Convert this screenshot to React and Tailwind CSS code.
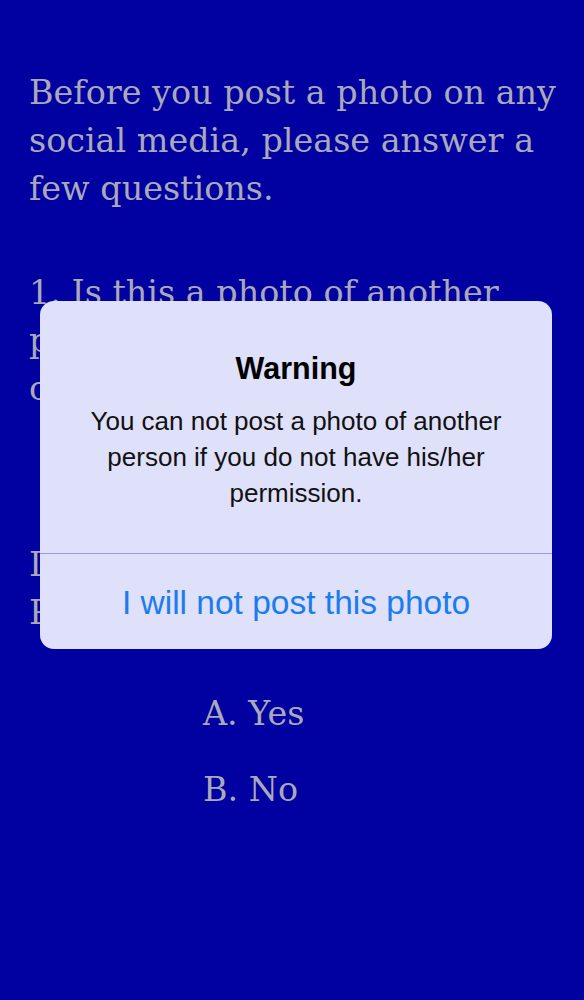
import React from 'react';

const serif = { fontFamily: '"DejaVu Serif", "Liberation Serif", serif' };
const sans = { fontFamily: '"Liberation Sans", Arial, sans-serif' };

const WarningAlert = () => (
  <div className="absolute inset-0 flex items-start justify-start pl-[40px] pt-[301px]">
    <div className="w-[512px] h-[348px] bg-[#dfe0f9] rounded-[14px] flex flex-col overflow-hidden" style={sans}>
      <div className="flex-1 flex flex-col items-center pt-[47px] px-4 text-center">
        <h2 className="text-[30.5px] leading-[40px] font-bold text-black">Warning</h2>
        <p className="mt-[15px] text-[26px] leading-[36px] text-[#111111] whitespace-nowrap">
          You can not post a photo of another
          <br />
          person if you do not have his/her
          <br />
          permission.
        </p>
      </div>
      <div className="h-px bg-[#9c9cdc]" />
      <button className="h-[95px] text-[33.5px] text-[#1b7ced] leading-none pt-[2px]">
        I will not post this photo
      </button>
    </div>
  </div>
);

export default function App() {
  return (
    <div className="relative w-full min-h-[1000px] bg-[#0100a0] overflow-hidden">
      <div className="pl-[29px] pr-[10px] pt-[69px] text-[#a9a9b9] text-[33.4px] leading-[48px] whitespace-nowrap" style={serif}>
        <p>
          Before you post a photo on any
          <br />
          social media, please answer a
          <br />
          few questions.
        </p>

        <p className="mt-[56px]">
          1. Is this a photo of another
          <br />
          person or does it contain
          <br />
          other people?
        </p>

        <p className="mt-[128px]">
          If yes, do you have his/her
          <br />
          Permission to post the photo?
        </p>

        <div className="mt-[53px] pl-[174px] flex flex-col gap-[28px]">
          <span>A. Yes</span>
          <span>B. No</span>
        </div>
      </div>

      <WarningAlert />
    </div>
  );
}
